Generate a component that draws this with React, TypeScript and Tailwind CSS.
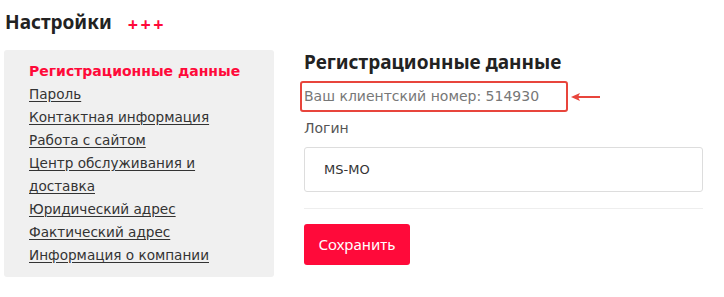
import React from 'react';

const MENU = [
  'Пароль',
  'Контактная информация',
  'Работа с сайтом',
  'Центр обслуживания и доставка',
  'Юридический адрес',
  'Фактический адрес',
  'Информация о компании',
];

export default function App() {
  return (
    <div className="w-[724px] h-[297px] bg-white overflow-hidden font-['DejaVu_Sans',sans-serif]">
      {/* Заголовок */}
      <div className="flex items-center pl-[5px] pb-[6px] h-[50px]">
        <h1 className="font-['Noto_Sans',sans-serif] font-bold text-[19px] leading-none text-[#222]">Настройки</h1>
        <span className="ml-[16px] mt-[3px] font-['Noto_Sans',sans-serif] font-bold text-[18px] leading-none tracking-[2.5px] text-[#ff0a3a]">+++</span>
      </div>

      <div className="flex">
        {/* Меню */}
        <div className="w-[270px] ml-[4px] h-[227px] bg-[#f0f0f0] rounded-[3px] pl-[25px] pt-[10px]">
          <div className="text-[14px] leading-[23px] font-bold text-[#ff0a3a]">Регистрационные данные</div>
          <ul className="text-[13.6px] leading-[23px] text-[#333]">
            {MENU.map((m) => (
              <li key={m} className="w-[210px]">
                <a href="#" className="underline underline-offset-2">{m}</a>
              </li>
            ))}
          </ul>
        </div>

        {/* Форма */}
        <div className="ml-[30px] w-[399px]">
          <h2 className="font-['Noto_Sans',sans-serif] font-bold text-[19px] leading-[24px] text-[#222]">
            Регистрационные данные
          </h2>
          <div className="flex items-center mt-[7px]">
            <div className="-ml-[4px] w-[268px] h-[31px] border-2 border-[#e8453c] rounded-[3px] flex items-center pl-[2px] text-[14px] text-[#777]">
              Ваш клиентский номер: 514930
            </div>
            <svg width="32" height="10" viewBox="0 0 32 10" className="ml-[2px]">
              <path d="M6 5 H30" stroke="#e8453c" strokeWidth="2" />
              <path d="M1 5 L10 1 L8 5 L10 9 Z" fill="#e8453c" />
            </svg>
          </div>
          <div className="mt-[7px] text-[14px] leading-[18px] text-[#555]">Логин</div>
          <div className="mt-[10px] h-[45px] border border-[#ddd] rounded-[3px] flex items-center pl-[19px] text-[13px] text-[#333]">
            MS-MO
          </div>
          <div className="mt-[16px] border-t border-[#eee]" />
          <button className="mt-[15px] w-[106px] h-[41px] bg-[#ff0a3a] rounded-[3px] text-white font-['Noto_Sans',sans-serif] text-[15px]">
            Сохранить
          </button>
        </div>
      </div>
    </div>
  );
}
